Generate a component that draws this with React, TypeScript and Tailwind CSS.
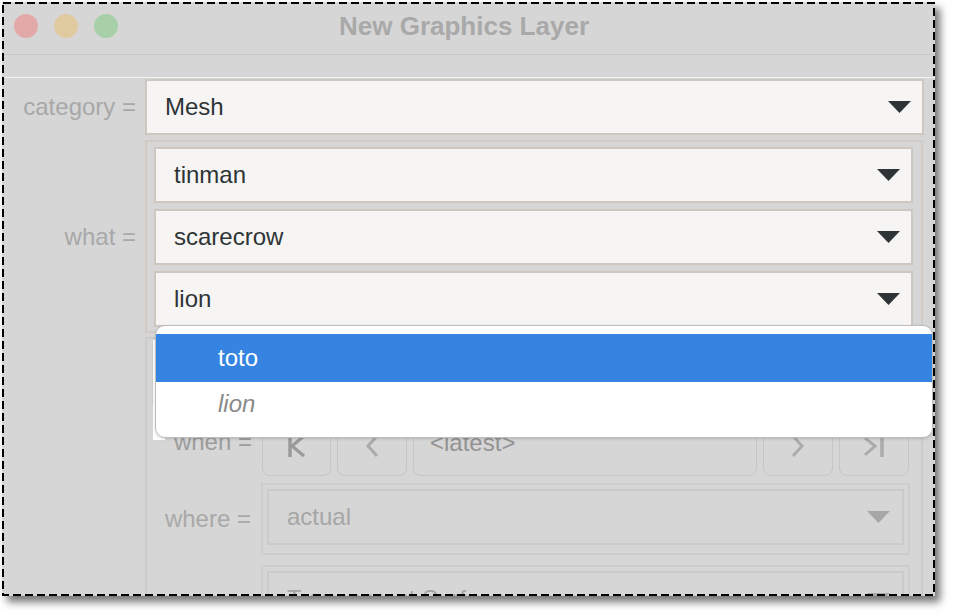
import React from "react";

const Tri = ({ color }: { color: string }) => (
  <svg width="23" height="12" viewBox="0 0 23 12" className="shrink-0">
    <path d="M0 0H23L11.5 12Z" fill={color} />
  </svg>
);

function ActiveSelect({ label }: { label: string }) {
  return (
    <div className="h-[56px] border-2 border-[#cdc7c0] bg-[#f6f5f3] flex items-center justify-between pl-[18px] pr-[11px]">
      <span className="text-[24px] text-[#2e3436] leading-none">{label}</span>
      <Tri color="#2e3436" />
    </div>
  );
}

function DimSelect({ label }: { label: string }) {
  return (
    <div className="border-2 border-[#cdcdcd] pt-[4px] px-[4px] pb-[8px] w-[649px]">
      <div className="h-[56px] border-2 border-[#cbcbcb] flex items-center justify-between pl-[18px] pr-[12px]">
        <span className="text-[24px] text-[#a6a6a6] leading-none">{label}</span>
        <Tri color="#a7a7a7" />
      </div>
    </div>
  );
}

const NavBtn = ({ w, children }: { w: string; children: React.ReactNode }) => (
  <div className={`${w} h-[60px] rounded-[8px] border border-[#c6c6c6] flex items-center justify-center`}>
    {children}
  </div>
);

export default function App() {
  return (
    <div className="w-[956px] h-[616px] bg-white pt-[2px] pl-[2px] font-['Liberation_Sans','Arial',sans-serif]">
      <div className="relative w-[933px] h-[594px] bg-[#d6d6d6] shadow-[5px_6px_8px_rgba(0,0,0,0.55)] overflow-hidden">
        {/* title bar */}
        <div className="h-[53px] border-b border-[#c9c9c9] grid grid-cols-[1fr_auto_1fr] items-center pb-[4px]">
          <div className="flex gap-[16px] pl-[12px]">
            <div className="w-[24px] h-[24px] rounded-full bg-[#e3a9a9]" />
            <div className="w-[24px] h-[24px] rounded-full bg-[#e0caa0]" />
            <div className="w-[24px] h-[24px] rounded-full bg-[#a7d0a9]" />
          </div>
          <div className="text-[26px] font-bold text-[#a9a9a9] leading-none pr-[9px]">New Graphics Layer</div>
          <div />
        </div>
        {/* toolbar band */}
        <div className="h-[23px] border-b border-[#f3f3f3]" />

        {/* category */}
        <div className="flex items-center mt-[1px]">
          <div className="w-[143px] pr-[9px] text-right text-[24px] text-[#a8a8a8] leading-none">category =</div>
          <div className="w-[779px]">
            <ActiveSelect label="Mesh" />
          </div>
        </div>

        {/* what */}
        <div className="flex items-center mt-[5px]">
          <div className="w-[143px] pr-[9px] text-right text-[24px] text-[#a8a8a8] leading-none">what =</div>
          <div className="w-[778px] border-2 border-[#d0cbc5] pt-[5px] pl-[7px] pr-[8px] pb-[4px] flex flex-col gap-[6px]">
            <ActiveSelect label="tinman" />
            <ActiveSelect label="scarecrow" />
            <ActiveSelect label="lion" />
          </div>
        </div>

        {/* lower group */}
        <div className="flex mt-[4px]">
          <div className="w-[143px]" />
          <div className="w-[778px] border-2 border-b-0 border-[#cbcbcb] pt-[3px] pl-[5px] pr-[5px] h-[300px]">
            <div className="h-[63px] border-2 border-[#cbcbcb]" />
            <div className="flex items-center mt-[11px]">
              <div className="w-[110px] pr-[10px] pb-[8px] text-right text-[24px] text-[#9c9c9c] leading-none">when =</div>
              <div className="flex gap-[6px]">
                <NavBtn w="w-[69px]">
                  <svg width="26" height="26" viewBox="0 0 26 26" fill="none" stroke="#9a9a9a" strokeWidth="3.5">
                    <path d="M6 2v22" />
                    <path d="M20 3l-12 10 12 10" strokeWidth="3.2" />
                  </svg>
                </NavBtn>
                <NavBtn w="w-[70px]">
                  <svg width="26" height="26" viewBox="0 0 26 26" fill="none" stroke="#ababab" strokeWidth="3">
                    <path d="M18 3l-9 10 9 10" />
                  </svg>
                </NavBtn>
                <div className="w-[344px] h-[60px] rounded-[8px] border border-[#c6c6c6] flex items-center pl-[16px] pb-[6px]">
                  <span className="text-[24px] text-[#939393] leading-none">&lt;latest&gt;</span>
                </div>
                <NavBtn w="w-[70px]">
                  <svg width="26" height="26" viewBox="0 0 26 26" fill="none" stroke="#ababab" strokeWidth="3">
                    <path d="M8 3l9 10-9 10" />
                  </svg>
                </NavBtn>
                <NavBtn w="w-[70px]">
                  <svg width="26" height="26" viewBox="0 0 26 26" fill="none" stroke="#ababab" strokeWidth="3">
                    <path d="M4 5l10 8-10 9" />
                    <path d="M21 2v22" strokeWidth="3.5" />
                  </svg>
                </NavBtn>
              </div>
            </div>
            <div className="flex items-center mt-[7px]">
              <div className="w-[109px] pr-[10px] text-right text-[24px] text-[#a8a8a8] leading-none">where =</div>
              <DimSelect label="actual" />
            </div>
            <div className="flex items-center mt-[10px]">
              <div className="w-[109px]" />
              <DimSelect label="Transparent Surface" />
            </div>
          </div>
        </div>

        {/* white backing behind popup */}
        <div className="absolute left-[151px] top-[338px] w-[12px] h-[100px] bg-white" />

        {/* popup */}
        <div className="absolute left-[153px] top-[323px] w-[778px] h-[113px] rounded-[10px] border border-[#bdbdbd] bg-white overflow-hidden pt-[8px] shadow-[0_1px_3px_rgba(0,0,0,0.15)]">
          <div className="h-[48px] bg-[#3584e2] flex items-center pl-[62px]">
            <span className="text-[24px] text-white leading-none">toto</span>
          </div>
          <div className="h-[44px] flex items-center pl-[62px]">
            <span className="text-[24px] text-[#8a8a8a] italic leading-none">lion</span>
          </div>
        </div>

        {/* dashed selection border */}
        <svg className="absolute left-0 top-0 pointer-events-none" width="933" height="594">
          <rect x="1" y="1" width="931" height="592" fill="none" stroke="#000" strokeWidth="2" strokeDasharray="8 4" />
        </svg>
      </div>
    </div>
  );
}
